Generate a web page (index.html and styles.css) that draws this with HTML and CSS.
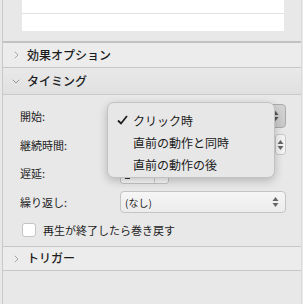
FILE: index.html
```html
<!doctype html>
<html><head>
<meta charset="utf-8">
<title>アニメーション</title>
<link rel="stylesheet" href="styles.css">
</head><body>
<div class="panel">
	<div class="preview">
		<div class="preview-box">
			<div class="preview-row"></div>
		</div>
	</div>

	<div class="section-head">
		<span class="chev"><svg width="5" height="8" viewBox="0 0 5 8"><polyline points="0.8,0.8 4,4 0.8,7.2" fill="none" stroke="#a6a6a6" stroke-width="1"/></svg></span>
		<span>効果オプション</span>
	</div>

	<div class="section-head open">
		<span class="chev down"><svg width="8" height="5" viewBox="0 0 8 5"><polyline points="0.8,0.8 4,4 7.2,0.8" fill="none" stroke="#959595" stroke-width="1"/></svg></span>
		<span>タイミング</span>
	</div>

	<div class="section-body">
		<div class="row row-start">
			<label>開始:</label>
			<div class="popup-btn pressed">
				<span class="value"></span>
				<span class="arrows"><svg width="7" height="12" viewBox="0 0 7 12"><polygon points="3.5,1 6.5,5 0.5,5" fill="#555"/><polygon points="3.5,11 6.5,7 0.5,7" fill="#555"/></svg></span>
			</div>
		</div>
		<div class="row row-duration">
			<label>継続時間:</label>
			<div class="combo">
				<div class="field"></div>
				<div class="stepper"><svg width="7" height="12" viewBox="0 0 7 12"><polygon points="3.5,1 6.5,5 0.5,5" fill="#666"/><polygon points="3.5,11 6.5,7 0.5,7" fill="#666"/></svg></div>
			</div>
		</div>
		<div class="row row-delay">
			<label>遅延:</label>
			<div class="delay">
				<div class="delay-field">
					<span class="num"><i class="dash"></i></span>
					<span class="down"><svg width="7" height="5" viewBox="0 0 7 5"><polygon points="3.5,4.5 6.5,0.5 0.5,0.5" fill="#666"/></svg></span>
				</div>
				<i class="tick-mark"></i>
			</div>
		</div>
		<div class="row row-repeat">
			<label>繰り返し:</label>
			<div class="popup-btn">
				<span class="value small">(なし)</span>
				<span class="arrows"><svg width="7" height="12" viewBox="0 0 7 12"><polygon points="3.5,1 6.5,5 0.5,5" fill="#666"/><polygon points="3.5,11 6.5,7 0.5,7" fill="#666"/></svg></span>
			</div>
		</div>
		<div class="check-row">
			<span class="checkbox"></span>
			<span>再生が終了したら巻き戻す</span>
		</div>

		<div class="menu">
			<div class="menu-item checked">
				<svg class="tick" width="11" height="10" viewBox="0 0 11 10"><polyline points="1,5.5 4,8.5 10,1" fill="none" stroke="#1e1e1e" stroke-width="1.8"/></svg>
				<span>クリック時</span>
			</div>
			<div class="menu-item"><span>直前の動作と同時</span></div>
			<div class="menu-item"><span>直前の動作の後</span></div>
		</div>
	</div>

	<div class="section-head">
		<span class="chev"><svg width="5" height="8" viewBox="0 0 5 8"><polyline points="0.8,0.8 4,4 0.8,7.2" fill="none" stroke="#a6a6a6" stroke-width="1"/></svg></span>
		<span>トリガー</span>
	</div>
</div>
</body></html>
```
FILE: styles.css
```css
html, body {
	margin: 0;
	height: 100%;
}

body {
	background: #e8e8e8;
	font: 11px "Noto Sans CJK JP", "Noto Sans", sans-serif;
	color: #222;
	overflow: hidden;
}

.panel {
	margin-left: 2px;
	margin-right: 1px;
	height: 100%;
	border-left: 1px solid #c9c9c9;
	border-right: 1px solid #dcdcdc;
	background: #e8e8e8;
}

.preview {
	height: 41px;
	padding: 0 17px 0 19px;
	box-sizing: border-box;
}

.preview-box {
	background: #fff;
	height: 31px;
}

.preview-row {
	height: 13px;
	border-bottom: 1px solid #e2e2e2;
}

.section-head {
	display: flex;
	align-items: center;
	height: 25px;
	box-sizing: border-box;
	padding: 0 0 2px 11px;
	border-top: 1px solid #c6c6c6;
	border-bottom: 1px solid #c6c6c6;
	background: #ececec;
	font-size: 12px;
	font-weight: 500;
	color: #1c1c1c;
}

.preview + .section-head {
	border-top: 2px solid #c2c2c2;
	border-bottom: 0;
	height: 26px;
}

.section-head.open {
	border-bottom: 0;
	height: 27px;
	background: linear-gradient(#e9e9e9, #e0e0e0);
}

.chev {
	width: 13px;
	flex: none;
	display: flex;
	align-items: center;
	padding-top: 2px;
}

.chev.down {
	padding-top: 3px;
	margin-left: -2px;
	width: 15px;
}

.section-body {
	position: relative;
	border-top: 1px solid #c9c9c9;
	height: 152px;
	padding: 9px 15px 0 17px;
	box-sizing: border-box;
}

.row {
	display: flex;
	align-items: center;
}

.row label {
	width: 100px;
	flex: none;
}

.row-start { height: 24px; }
.row-duration { height: 21px; margin-top: 6px; }
.row-delay { height: 22px; margin-top: 7px; }
.row-repeat { height: 22px; margin-top: 7px; }

.popup-btn {
	flex: 1;
	height: 100%;
	display: flex;
	align-items: center;
	justify-content: space-between;
	box-sizing: border-box;
	border: 1px solid #c4c4c4;
	border-radius: 4px;
	background: linear-gradient(#f6f6f6, #ececec);
	padding: 0 6px 0 4px;
}

.popup-btn.pressed {
	background: linear-gradient(#d4d4d4, #c9c9c9);
	border-color: #aaa;
}

.value.small {
	font-size: 10px;
}

.arrows {
	display: flex;
}

.combo {
	flex: 1;
	height: 100%;
	display: flex;
	gap: 4px;
}

.combo .field {
	flex: 1;
	background: #fff;
	border: 1px solid #c4c4c4;
}

.stepper {
	width: 9px;
	border: 1px solid #c8c8c8;
	border-radius: 3px;
	background: #f3f3f3;
	display: flex;
	align-items: center;
	justify-content: center;
}

.delay {
	display: flex;
	align-items: center;
	gap: 11px;
	height: 100%;
}

.delay-field {
	display: flex;
	width: 49px;
	height: 100%;
	box-sizing: border-box;
	border: 1px solid #c4c4c4;
	border-radius: 3px;
	background: #fafafa;
}

.delay-field .num {
	flex: 1;
	padding: 14px 0 0 4px;
}

.dash {
	display: block;
	width: 5px;
	height: 2px;
	background: #333;
}

.delay-field .down {
	width: 13px;
	border-left: 1px solid #d0d0d0;
	display: flex;
	align-items: center;
	justify-content: center;
	padding-top: 5px;
}

.tick-mark {
	width: 2px;
	height: 2px;
	background: #777;
	margin-top: 4px;
}

.check-row {
	display: flex;
	align-items: center;
	gap: 7px;
	margin-top: 9px;
	padding-left: 2px;
	height: 16px;
}

.checkbox {
	width: 12px;
	height: 12px;
	border: 1px solid #c4c4c4;
	border-radius: 3px;
	background: #fff;
}

.menu {
	position: absolute;
	left: 104px;
	top: 7px;
	width: 168px;
	height: 76px;
	box-sizing: border-box;
	padding-top: 6px;
	background: #e7e7e7;
	border: 1px solid #c2c2c2;
	border-radius: 7px;
	box-shadow: 0 3px 10px rgba(0, 0, 0, 0.22);
	font-size: 12px;
	color: #1a1a1a;
}

.menu-item {
	display: flex;
	align-items: center;
	height: 22px;
	padding-left: 25px;
	position: relative;
}

.tick {
	position: absolute;
	left: 9px;
	top: 6px;
}
```
